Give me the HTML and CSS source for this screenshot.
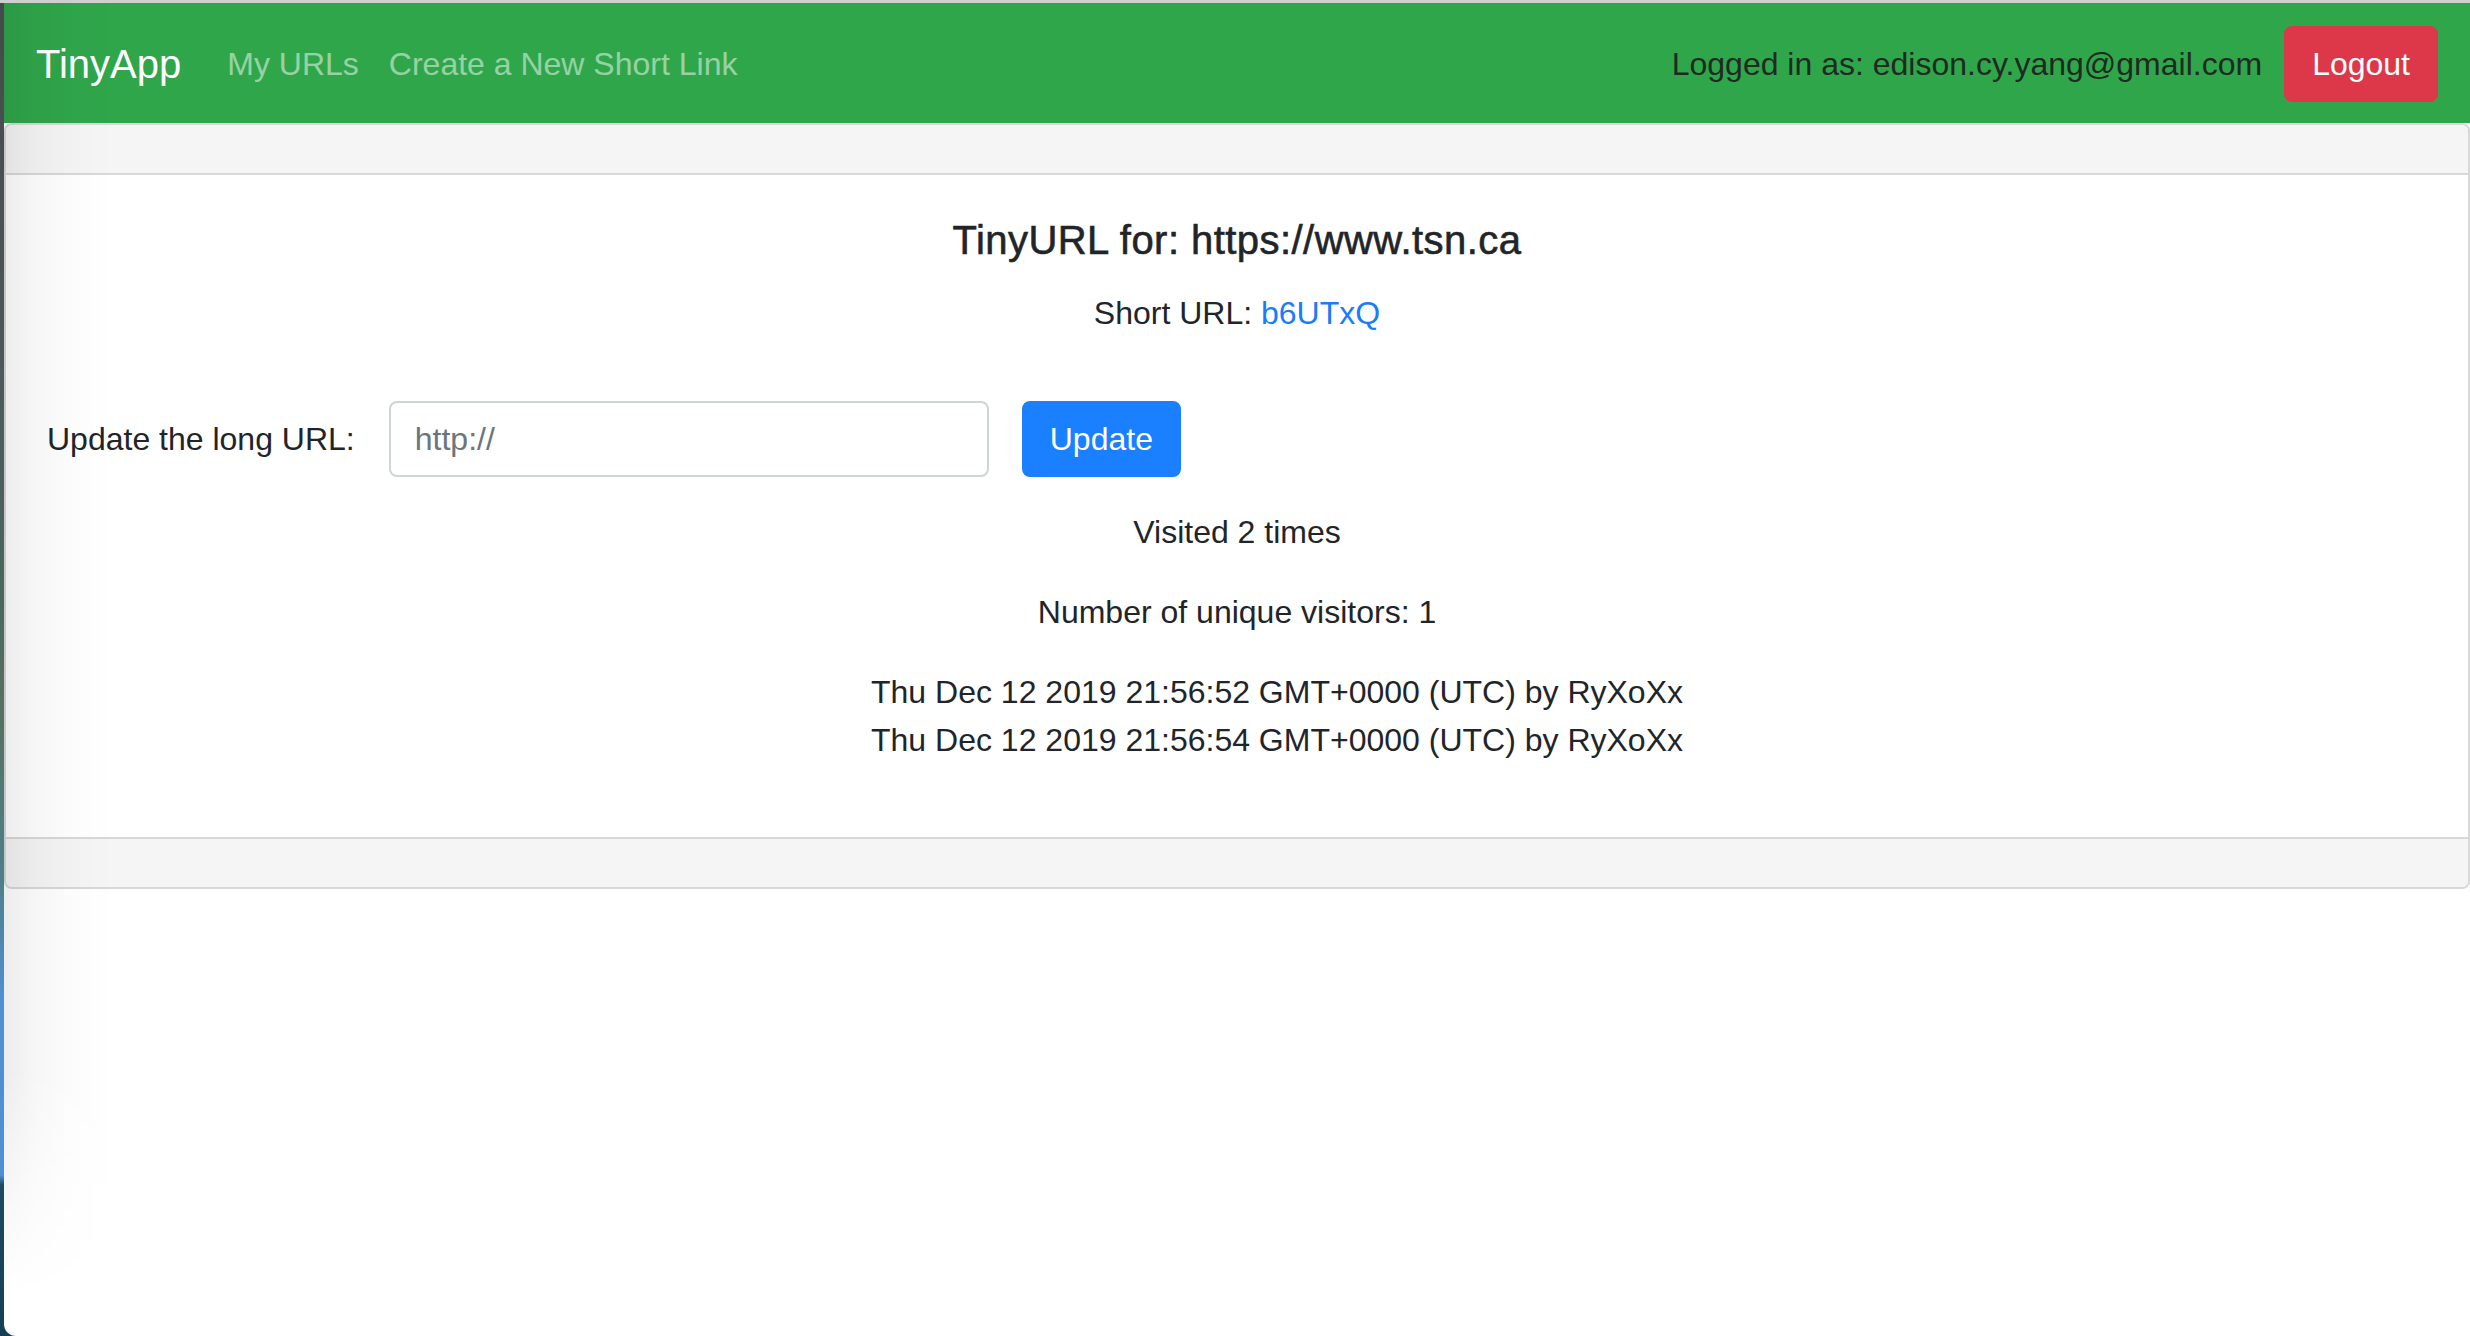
FILE: index.html
```html
<!DOCTYPE html>
<html lang="en">
<head>
<meta charset="utf-8">
<title>TinyApp</title>
<link rel="stylesheet" href="styles.css">
</head>
<body>
  <div class="window">
    <nav class="navbar">
      <div class="nav-left">
        <a class="brand" href="#">TinyApp</a>
        <a class="nav-link" href="#">My URLs</a>
        <a class="nav-link" href="#">Create a New Short Link</a>
      </div>
      <div class="nav-right">
        <span class="logged">Logged in as: edison.cy.yang@gmail.com</span>
        <button class="btn btn-danger" type="button">Logout</button>
      </div>
    </nav>

    <div class="card">
      <div class="card-header"></div>
      <div class="card-body">
        <h5 class="card-title">TinyURL for: https://www.tsn.ca</h5>
        <p class="short">Short URL: <a href="#">b6UTxQ</a></p>
        <form class="update-form">
          <label class="form-label" for="longURL">Update the long URL:</label>
          <input class="form-input" id="longURL" type="text" placeholder="http://">
          <button class="btn btn-primary" type="button">Update</button>
        </form>
        <p class="stat">Visited 2 times</p>
        <p class="stat">Number of unique visitors: 1</p>
        <ul class="visits">
          <li>Thu Dec 12 2019 21:56:52 GMT+0000 (UTC) by RyXoXx</li>
          <li>Thu Dec 12 2019 21:56:54 GMT+0000 (UTC) by RyXoXx</li>
        </ul>
      </div>
      <div class="card-footer"></div>
    </div>
    <div class="shadow"></div>
  </div>
</body>
</html>
```
FILE: styles.css
```css
* { box-sizing: border-box; }

html, body { height: 100%; }

body {
  margin: 0;
  font-family: "Liberation Sans", Arial, sans-serif;
  font-size: 32px;
  line-height: 1.5;
  color: #212529;
  padding-top: 3px;
  background:
    linear-gradient(#cfcfcf, #cfcfcf) top left / 100% 3px no-repeat,
    linear-gradient(to bottom,
      #45494b 0px, #4d575b 350px, #4a675f 600px, #57705f 700px,
      #4e7f89 880px, #4f8fd3 1000px, #4f90d5 1175px, #1d4b62 1185px, #163f55 1336px);
  overflow: hidden;
}

.window {
  position: relative;
  margin-left: 4px;
  height: 1333px;
  background: #fff;
  border-bottom-left-radius: 12px;
  overflow: hidden;
}

/* navbar */
.navbar {
  display: flex;
  align-items: center;
  justify-content: space-between;
  height: 120px;
  padding: 2px 32px 0;
  background: #30a64b;
}

.nav-left, .nav-right {
  display: flex;
  align-items: center;
}

.brand {
  font-size: 40px;
  line-height: 60px;
  color: #fff;
  text-decoration: none;
  margin-right: 31px;
}

.nav-link {
  font-size: 32px;
  color: rgba(255, 255, 255, 0.5);
  text-decoration: none;
  padding: 0 15px;
}
.nav-link:first-of-type { margin-left: -16px; }

.logged {
  color: #1f2a22;
  margin-right: 22px;
}

.btn {
  font-family: inherit;
  font-size: 32px;
  line-height: 48px;
  padding: 12px 24px;
  border: 2px solid transparent;
  border-radius: 8px;
  color: #fff;
  cursor: pointer;
}
.btn-danger { background: #dc384a; border-color: #dc384a; padding: 12px 26px; }
.btn-primary { background: #1a80ff; border-color: #1a80ff; padding: 12px 26px; }

/* card */
.card {
  border: 2px solid #d8d8d8;
  border-radius: 8px;
  background: #fff;
}

.card-header {
  height: 50px;
  background: #f5f5f5;
  border-bottom: 2px solid #d8d8d8;
  border-radius: 6px 6px 0 0;
}

.card-footer {
  height: 50px;
  background: #f5f5f5;
  border-top: 2px solid #d8d8d8;
  border-radius: 0 0 6px 6px;
}

.card-body {
  padding: 41px 41px 41px;
  text-align: center;
}

.card-title {
  margin: 0 0 25px;
  font-size: 40px;
  font-weight: 500;
  line-height: 48px;
  letter-spacing: 0.45px;
  -webkit-text-stroke: 0.6px #212529;
}

.short { margin: 0 0 64px; }
.short a { color: #1a7cf8; text-decoration: none; }

.update-form {
  display: flex;
  align-items: center;
  margin-bottom: 31px;
}

.form-label { margin-right: 34px; }

.form-input {
  width: 600px;
  height: 76px;
  padding: 12px 24px;
  font-family: inherit;
  font-size: 32px;
  color: #495057;
  border: 2px solid #ced4da;
  border-radius: 8px;
  margin-right: 33px;
}
.form-input::placeholder { color: #6c757d; }

.stat { margin: 0 0 32px; }

.visits {
  list-style: none;
  margin: 0 0 32px;
  padding-left: 80px;
}

/* window shadow on the left edge */
.shadow {
  position: absolute;
  left: 0;
  top: 0;
  bottom: 0;
  width: 110px;
  pointer-events: none;
  background: linear-gradient(to right, rgba(0,0,0,0.075) 0px, rgba(0,0,0,0.035) 30px, rgba(0,0,0,0.01) 70px, rgba(0,0,0,0) 110px);
  -webkit-mask-image: linear-gradient(to bottom, #000 80%, transparent 97%);
  mask-image: linear-gradient(to bottom, #000 80%, transparent 97%);
}
```
